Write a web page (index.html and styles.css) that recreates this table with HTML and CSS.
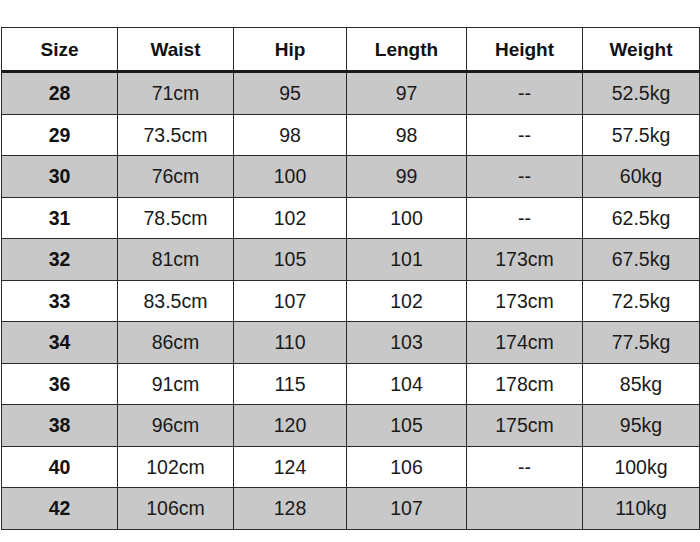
FILE: index.html
```html
<!DOCTYPE html>
<html>
<head>
<meta charset="utf-8">
<link rel="stylesheet" href="styles.css">
</head>
<body>
<table class="size-table">
  <colgroup>
    <col class="c1"><col class="c2"><col class="c3"><col class="c4"><col class="c5"><col class="c6">
  </colgroup>
  <thead>
    <tr><th>Size</th><th>Waist</th><th>Hip</th><th>Length</th><th>Height</th><th>Weight</th></tr>
  </thead>
  <tbody>
    <tr class="gray"><td class="sz">28</td><td>71cm</td><td>95</td><td>97</td><td>--</td><td>52.5kg</td></tr>
    <tr><td class="sz">29</td><td>73.5cm</td><td>98</td><td>98</td><td>--</td><td>57.5kg</td></tr>
    <tr class="gray"><td class="sz">30</td><td>76cm</td><td>100</td><td>99</td><td>--</td><td>60kg</td></tr>
    <tr><td class="sz">31</td><td>78.5cm</td><td>102</td><td>100</td><td>--</td><td>62.5kg</td></tr>
    <tr class="gray"><td class="sz">32</td><td>81cm</td><td>105</td><td>101</td><td>173cm</td><td>67.5kg</td></tr>
    <tr><td class="sz">33</td><td>83.5cm</td><td>107</td><td>102</td><td>173cm</td><td>72.5kg</td></tr>
    <tr class="gray"><td class="sz">34</td><td>86cm</td><td>110</td><td>103</td><td>174cm</td><td>77.5kg</td></tr>
    <tr><td class="sz">36</td><td>91cm</td><td>115</td><td>104</td><td>178cm</td><td>85kg</td></tr>
    <tr class="gray"><td class="sz">38</td><td>96cm</td><td>120</td><td>105</td><td>175cm</td><td>95kg</td></tr>
    <tr><td class="sz">40</td><td>102cm</td><td>124</td><td>106</td><td>--</td><td>100kg</td></tr>
    <tr class="gray"><td class="sz">42</td><td>106cm</td><td>128</td><td>107</td><td></td><td>110kg</td></tr>
  </tbody>
</table>
</body>
</html>
```
FILE: styles.css
```css
html, body {
  margin: 0;
  padding: 0;
  background: #ffffff;
}
body {
  padding-top: 27px;
  padding-left: 1px;
  font-family: "Liberation Sans", Arial, sans-serif;
  color: #1a1a1a;
}
.size-table {
  border-collapse: collapse;
  table-layout: fixed;
  width: 698px;
}
.c1 { width: 116px; }
.c2 { width: 116px; }
.c3 { width: 113px; }
.c4 { width: 120px; }
.c5 { width: 116px; }
.c6 { width: 117px; }
.size-table th,
.size-table td {
  border: 1px solid #2a2a2a;
  text-align: center;
  padding: 0;
}
.size-table th {
  font-size: 19px;
  font-weight: bold;
  height: 41px;
  padding-top: 1px;
  border-bottom: 3px solid #1a1a1a;
  color: #111;
}
.size-table td {
  font-size: 19.5px;
  height: 39.5px;
  padding-top: 1px;
}
.size-table td.sz {
  font-weight: bold;
  font-size: 19.5px;
  color: #111;
}
.gray td {
  background: #c8c8c8;
}
```
